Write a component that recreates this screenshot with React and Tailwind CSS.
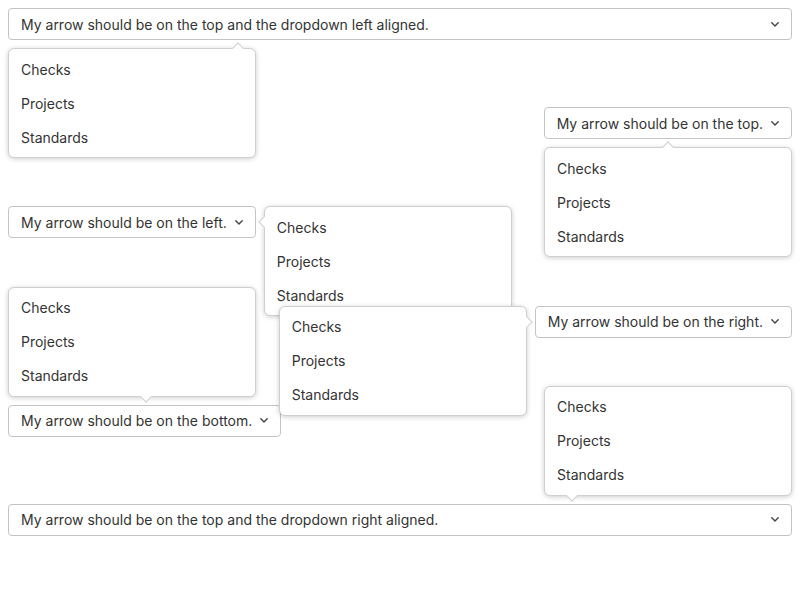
import React from "react";

const Chevron = () => (
  <svg width="8" height="5" viewBox="0 0 8 5" className="shrink-0">
    <polyline points="0.8,0.8 4,4 7.2,0.8" fill="none" stroke="#444" strokeWidth="1.4" strokeLinecap="round" strokeLinejoin="round" />
  </svg>
);

const Items = () => (
  <div className="flex flex-col">
    <div className="h-[34px] flex items-center pl-3">Checks</div>
    <div className="h-[34px] flex items-center pl-3">Projects</div>
    <div className="h-[34px] flex items-center pl-3">Standards</div>
  </div>
);

const popBase =
  "absolute w-[248px] bg-white border border-[#cfcfcf] rounded-[6px] py-[3px] shadow-[0_1px_5px_rgba(0,0,0,0.2)] z-10";

const arrowBase = "absolute w-[8px] h-[8px] rotate-45 bg-white border-[#cfcfcf]";

const Button = ({ children, full }) => (
  <button
    className={
      "h-[32px] flex items-center border border-[#c4c4c4] rounded-[4px] bg-white px-3 gap-2 text-[14px] text-[#333] " +
      (full ? "w-full justify-between" : "")
    }
  >
    <span>{children}</span>
    <Chevron />
  </button>
);

export default function App() {
  return (
    <div
      className="w-[800px] h-[600px] bg-white p-2 flex flex-col gap-[67.2px] text-[14px] text-[#333]"
      style={{ fontFamily: "Inter, 'Noto Sans', sans-serif" }}
    >
      <div className="relative">
        <Button full>My arrow should be on the top and the dropdown left aligned.</Button>
        <div className={popBase + " left-0 top-[calc(100%+8px)]"}>
          <div className={arrowBase + " border-l border-t -top-[5px] left-[225px]"} />
          <Items />
        </div>
      </div>

      <div className="flex justify-end">
        <div className="relative">
          <Button>My arrow should be on the top.</Button>
          <div className={popBase + " right-0 top-[calc(100%+8px)]"}>
            <div className={arrowBase + " border-l border-t -top-[5px] left-[119px]"} />
            <Items />
          </div>
        </div>
      </div>

      <div className="flex justify-start">
        <div className="relative">
          <Button>My arrow should be on the left.</Button>
          <div className={popBase + " left-[calc(100%+8px)] top-0"}>
            <div className={arrowBase + " border-l border-b -left-[5px] top-[11px]"} />
            <Items />
          </div>
        </div>
      </div>

      <div className="flex justify-end">
        <div className="relative">
          <Button>My arrow should be on the right.</Button>
          <div className={popBase + " right-[calc(100%+8px)] top-0"}>
            <div className={arrowBase + " border-r border-t -right-[5px] top-[11px]"} />
            <Items />
          </div>
        </div>
      </div>

      <div className="flex justify-start">
        <div className="relative">
          <Button>My arrow should be on the bottom.</Button>
          <div className={popBase + " left-0 bottom-[calc(100%+8px)]"}>
            <div className={arrowBase + " border-r border-b -bottom-[5px] left-[133px]"} />
            <Items />
          </div>
        </div>
      </div>

      <div className="relative">
        <Button full>My arrow should be on the top and the dropdown right aligned.</Button>
        <div className={popBase + " right-0 bottom-[calc(100%+8px)]"}>
          <div className={arrowBase + " border-r border-b -bottom-[5px] left-[23px]"} />
          <Items />
        </div>
      </div>
    </div>
  );
}
